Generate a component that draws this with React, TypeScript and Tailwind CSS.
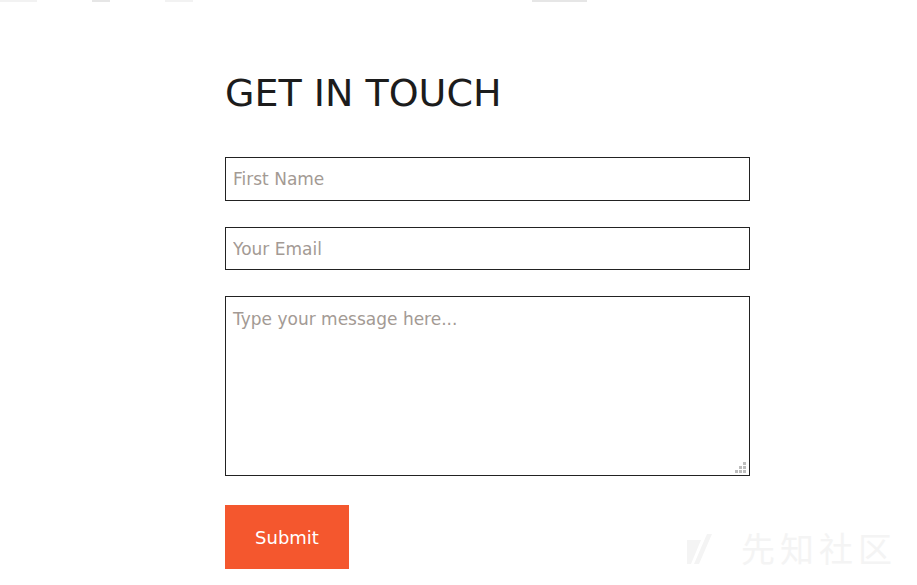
export default function App() {
  return (
    <div className="relative min-h-[585px] w-full overflow-hidden bg-white font-['DejaVu_Sans',sans-serif]">
      <div className="h-[2px] w-full bg-[linear-gradient(90deg,#f2f2f2_0,#f2f2f2_4%,transparent_4%,transparent_10%,#e6e6e6_10%,#e6e6e6_12%,transparent_12%,transparent_18%,#f2f2f2_18%,#f2f2f2_21%,transparent_21%,transparent_58%,#e6e6e6_58%,#e6e6e6_64%,transparent_64%)]" />
      <div className="ml-[225px] w-[525px] pt-[68px]">
        <h1 className="text-[38px] font-normal leading-[46px] text-[#1c1c1c]">GET IN TOUCH</h1>
        <form className="mt-[41px] flex flex-col">
          <input
            className="h-[44px] w-full border border-[#222] px-[7px] text-[17px] text-[#333] placeholder:text-[#a39a94] outline-none"
            placeholder="First Name"
          />
          <input
            className="mt-[26px] h-[43px] w-full border border-[#222] px-[7px] text-[17px] text-[#333] placeholder:text-[#a39a94] outline-none"
            placeholder="Your Email"
          />
          <div className="relative mt-[26px] h-[180px] w-full">
            <textarea
              className="h-full w-full resize-none border border-[#222] px-[7px] pt-[10px] text-[17px] text-[#333] placeholder:text-[#a39a94] outline-none"
              placeholder="Type your message here..."
            />
            <svg className="absolute bottom-[3px] right-[4px]" width="11" height="11" viewBox="0 0 11 11">
              <rect x="8" y="0" width="3" height="3" fill="#bdbdbd" />
              <rect x="4" y="4" width="3" height="3" fill="#bdbdbd" />
              <rect x="8" y="4" width="3" height="3" fill="#bdbdbd" />
              <rect x="0" y="8" width="3" height="3" fill="#bdbdbd" />
              <rect x="4" y="8" width="3" height="3" fill="#bdbdbd" />
              <rect x="8" y="8" width="3" height="3" fill="#bdbdbd" />
            </svg>
          </div>
          <button
            type="button"
            className="mt-[29px] h-[64px] w-[124px] bg-[#f4572e] text-[18px] text-white"
          >
            Submit
          </button>
        </form>
      </div>
      <div className="absolute bottom-[20px] right-[20px] flex items-center gap-[12px] text-[#f4f4f4]">
        <svg width="42" height="32" viewBox="0 0 42 32">
          <path d="M0 8h14L4 32H0z M20 2h5L12 32H7z" fill="#f4f4f4" />
        </svg>
        <span className="font-['Noto_Sans_CJK_SC',sans-serif] text-[34px] leading-none tracking-[5px]">先知社区</span>
      </div>
    </div>
  );
}
